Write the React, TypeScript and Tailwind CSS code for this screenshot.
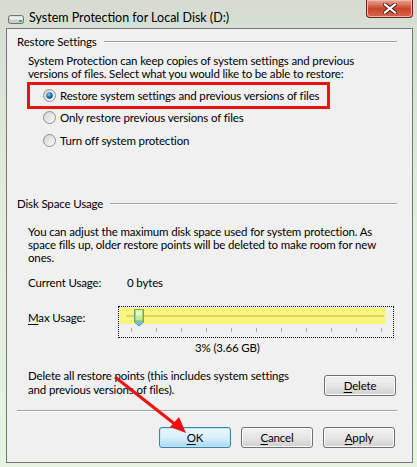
import React from "react";

const font = { fontFamily: "Lato, 'Noto Sans', sans-serif" };

function Radio({ checked }: { checked?: boolean }) {
  return (
    <svg width="13" height="13" viewBox="0 0 13 13" className="shrink-0">
      <defs>
        <linearGradient id="rb" x1="0" y1="0" x2="1" y2="1">
          <stop offset="0" stopColor="#d2d2d2" />
          <stop offset="1" stopColor="#fbfbfb" />
        </linearGradient>
        <radialGradient id="rd" cx="0.4" cy="0.35" r="0.7">
          <stop offset="0" stopColor="#8fd4ff" />
          <stop offset="0.5" stopColor="#1f7bc4" />
          <stop offset="1" stopColor="#0c3d6e" />
        </radialGradient>
      </defs>
      <circle cx="6.5" cy="6.5" r="6" fill="url(#rb)" stroke="#8e8f8f" strokeWidth="1" />
      {checked && <circle cx="6.5" cy="6.5" r="3.2" fill="url(#rd)" />}
    </svg>
  );
}

function Btn({ label, u, primary }: { label: string; u: number; primary?: boolean }) {
  return (
    <div
      className={
        "flex h-[21px] w-[72px] items-center justify-center rounded-[3px] border leading-[14px] text-black " +
        (primary
          ? "border-[#3c7fb1] bg-gradient-to-b from-[#eaf6fd] via-[#d9f0fc] to-[#a7d9f5] shadow-[inset_0_0_0_1px_#bfe6fa]"
          : "border-[#707070] bg-gradient-to-b from-[#f2f2f2] via-[#e6e6e6] to-[#cfcfcf] shadow-[inset_0_0_0_1px_#fcfcfc]")
      }
    >
      <span>
        {label.slice(0, u)}
        <span className="underline underline-offset-2">{label[u]}</span>
        {label.slice(u + 1)}
      </span>
    </div>
  );
}

function Heading({ text, h }: { text: string; h: string }) {
  return (
    <div className={"flex items-center gap-[7px] pr-[15px] " + h}>
      <span className="whitespace-nowrap">{text}</span>
      <div className="h-px flex-1 bg-[#a0a0a0] shadow-[0_1px_0_#ffffff]" />
    </div>
  );
}

export default function App() {
  const ticks = Array.from({ length: 11 }, (_, i) => i);
  return (
    <div
      className="relative h-[467px] w-[417px] overflow-hidden bg-gradient-to-b from-[#d6dcd2] via-[#e4eedf] to-[#e6f4e1] text-[12px] text-black"
      style={font}
    >
      {/* title bar */}
      <div className="flex h-[28px] items-start justify-between">
        <div className="flex items-center pl-[8px] pt-[10px]">
          <svg width="16" height="9" viewBox="0 0 16 9" className="mr-[5px] mt-[2px]">
            <rect x="0.5" y="0.5" width="15" height="8" rx="2" fill="#c9cccc" stroke="#6c7070" />
            <rect x="1.5" y="1.5" width="13" height="3" rx="1" fill="#eef0f0" />
            <rect x="11" y="5" width="3" height="2" fill="#3fbf3f" />
          </svg>
          <span className="whitespace-nowrap text-[12.5px] leading-[16px] text-black">System Protection for Local Disk (D:)</span>
        </div>
        <div className="mr-[4px] flex h-[18px] w-[47px] items-center justify-center rounded-b-[4px] border border-t-0 border-[#6b2118] bg-gradient-to-b from-[#e8a493] via-[#c9452c] to-[#d8644a] shadow-[inset_0_0_0_1px_#efb7a8]">
          <svg width="14" height="11" viewBox="0 0 14 11">
            <path d="M2 1.5 L12 9.5 M12 1.5 L2 9.5" stroke="#4a1a14" strokeWidth="4" strokeLinecap="square" />
            <path d="M2 1.5 L12 9.5 M12 1.5 L2 9.5" stroke="#ffffff" strokeWidth="2.2" strokeLinecap="square" />
          </svg>
        </div>
      </div>

      {/* dialog body */}
      <div className="ml-[6px] flex h-[435px] w-[407px] flex-col whitespace-nowrap border border-[#777777] bg-[#f0f0f0] pl-[10px] text-[11.5px] leading-[13px] tracking-[-0.15px] [&>*]:shrink-0">
        <Heading text="Restore Settings" h="h-[25px]" />
        <div className="pl-[11px]">
          <div>System Protection can keep copies of system settings and previous</div>
          <div>versions of files. Select what you would like to be able to restore:</div>
        </div>
        <div className="ml-[10px] mt-[2px] flex h-[27px] w-[303px] items-center gap-[4px] border-[3px] border-[#ee1111] pl-[13px]">
          <Radio checked />
          <span>Restore system settings and previous versions of files</span>
        </div>
        <div className="ml-[26px] flex h-[17px] items-center gap-[4px]">
          <Radio />
          <span>Only restore previous versions of files</span>
        </div>
        <div className="ml-[26px] mt-[6px] flex h-[17px] items-center gap-[4px]">
          <Radio />
          <span>Turn off system protection</span>
        </div>

        <div className="mt-[46px]">
          <Heading text="Disk Space Usage" h="h-[16px]" />
        </div>
        <div className="mt-[14px] pl-[11px]">
          <div>You can adjust the maximum disk space used for system protection. As</div>
          <div>space fills up, older restore points will be deleted to make room for new</div>
          <div>ones.</div>
        </div>
        <div className="mt-[10px] flex h-[16px] items-center pl-[11px]">
          <span className="w-[99px]">Current Usage:</span>
          <span>0 bytes</span>
        </div>
        <div className="mt-[16px] flex h-[32px] items-start pl-[11px]">
          <div className="flex h-[22px] w-[90px] items-center">
            <span>
              <span className="underline underline-offset-2">M</span>ax Usage:
            </span>
          </div>
          <div className="relative h-[32px] w-[276px] border border-dotted border-black">
            <div className="absolute left-[1px] top-[1px] h-[16px] w-[266px] rounded-[2px] bg-[#f8f77c]" />
            <div className="absolute left-[7px] top-[8px] h-[2px] w-[258px] bg-[#dcd85c]" />
            {ticks.map((i) => (
              <div
                key={i}
                className="absolute top-[21px] h-[4px] w-px bg-[#a8a8a8]"
                style={{ left: 12 + i * 25 }}
              />
            ))}
            <svg width="12" height="19" viewBox="0 0 12 19" className="absolute left-[14px] top-[1px]">
              <path d="M1.5 1.5 H10.5 V14 L6 18 L1.5 14 Z" fill="#6ec4ea" stroke="#3e8fc0" />
              <path d="M2 1.5 H10 V13 H2 Z" fill="#c6ec8c" stroke="#8ab84c" />
              <rect x="3" y="2.5" width="6" height="5" fill="#e6f8c8" />
            </svg>
          </div>
        </div>
        <div className="flex h-[18px] items-center pl-[178px]">3% (3.66 GB)</div>
        <div className="mt-[13px] flex items-start justify-between pl-[11px] pr-[16px]">
          <div className="leading-[14px]">
            <div>Delete all restore points (this includes system settings</div>
            <div>and previous versions of files).</div>
          </div>
          <div className="mt-[6px]">
            <Btn label="Delete" u={0} />
          </div>
        </div>
        <div className="mr-[15px] mt-[13px] h-px bg-[#a0a0a0] shadow-[0_1px_0_#ffffff]" />
        <div className="mt-[16px] flex justify-end gap-[10px] pr-[17px]">
          <Btn label="OK" u={0} primary />
          <Btn label="Cancel" u={0} />
          <Btn label="Apply" u={0} />
        </div>
      </div>

      {/* annotation arrow */}
      <svg className="pointer-events-none absolute left-0 top-0" width="417" height="467">
        <line x1="115" y1="377" x2="176" y2="425" stroke="#ee1111" strokeWidth="3" />
        <path d="M186 433 L170 427 L179 417 Z" fill="#ee1111" />
      </svg>
    </div>
  );
}
